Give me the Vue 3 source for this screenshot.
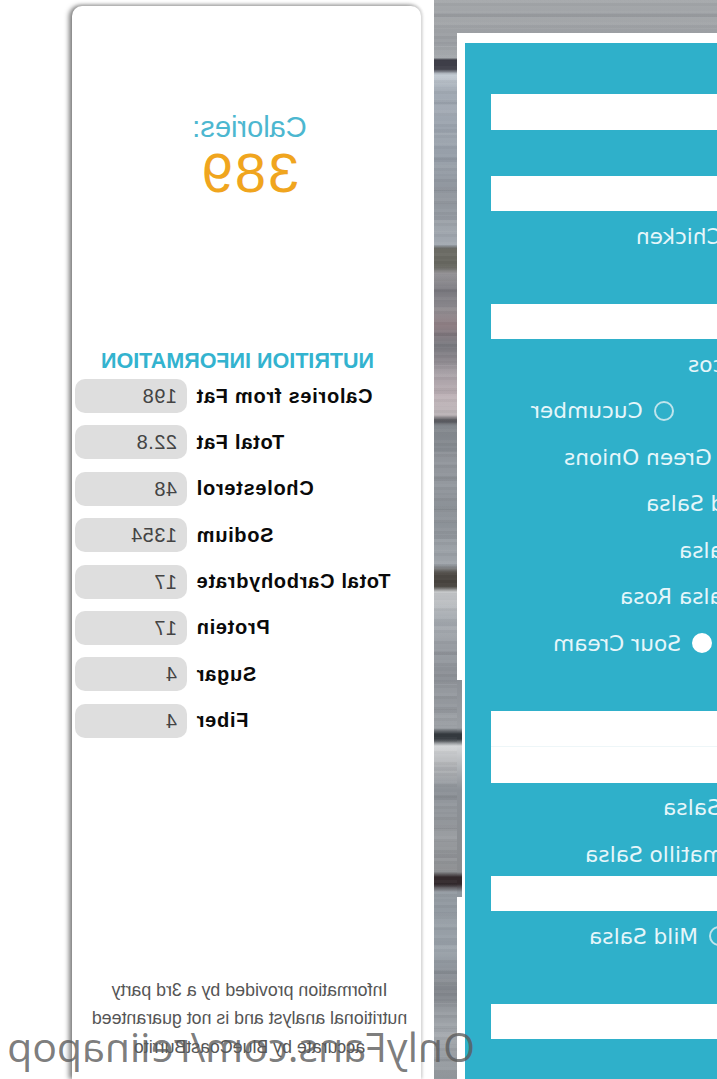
<template>
  <div class="page">
    <!-- order form on a wood background -->
    <section class="wood">
      <div class="frame">
        <form class="form" @submit.prevent>
          <div v-for="(group, g) in groups" :key="g" class="group">
            <template v-for="(part, p) in group" :key="p">
              <div class="bar" :class="{ double: part.double }"></div>
              <div v-for="row in part.rows" :key="row.options[row.options.length - 1].label" class="row" :style="{ width: row.end + 'px' }">
                <label v-for="opt in row.options" :key="opt.label" class="option">
                  <span class="radio" :class="{ on: opt.on }"></span>
                  {{ opt.label }}
                </label>
              </div>
            </template>
          </div>
        </form>
      </div>
    </section>

    <!-- nutrition card -->
    <aside class="card">
      <div class="calories">
        <div class="cal-label">Calories:</div>
        <div class="cal-value">{{ calories }}</div>
      </div>
      <h2 class="heading">NUTRITION INFORMATION</h2>
      <div class="facts">
        <div v-for="fact in facts" :key="fact.name" class="fact">
          <span class="fact-name">{{ fact.name }}</span>
          <span class="fact-value">{{ fact.value }}</span>
        </div>
      </div>
      <p class="note">
        Information provided by a 3rd party<br />
        nutritional analyst and is not guaranteed<br />
        accurate by BlueCoastBurrito
      </p>
    </aside>

    <div class="watermark">OnlyFans.com/reiinapop</div>
  </div>
</template>

<script setup>
const calories = 389;

const facts = [
  { name: 'Calories from Fat', value: '198' },
  { name: 'Total Fat', value: '22.8' },
  { name: 'Cholesterol', value: '48' },
  { name: 'Sodium', value: '1354' },
  { name: 'Total Carbohydrate', value: '17' },
  { name: 'Protein', value: '17' },
  { name: 'Sugar', value: '4' },
  { name: 'Fiber', value: '4' },
];

// end = where the row stops, from the clipped side of the panel
const opt = (end, ...labels) => ({ end, options: labels.map((label) => ({ label })) });

const groups = [
  [{ rows: [] }],
  [{ rows: [opt(81, 'Chicken')] }],
  [
    {
      rows: [
        opt(29, 'Tacos'),
        opt(186, 'Lettuce', 'Cucumber'),
        opt(153, 'Green Onions'),
        opt(71, 'Red Salsa'),
        opt(38, 'Salsa'),
        opt(97, 'Salsa Rosa'),
        { end: 164, options: [{ label: 'Sour Cream', on: true }] },
      ],
    },
  ],
  [
    { double: true, rows: [opt(54, 'Verde Salsa'), opt(132, 'Tomatillo Salsa')] },
    { rows: [opt(128, 'Mild Salsa')] },
  ],
  [{ rows: [] }],
];
</script>

<style scoped>
.page {
  position: relative;
  display: flex;
  width: 717px;
  height: 1079px;
  overflow: hidden;
  background: #fff;
  transform: scaleX(-1);
}

.wood {
  flex: 0 0 283px;
  height: 1079px;
  padding-top: 33px;
  box-sizing: border-box;
  background:
    repeating-linear-gradient(180deg, rgba(255, 255, 255, 0.03) 0 3px, rgba(0, 0, 0, 0.03) 3px 6px, transparent 6px 11px),
    repeating-linear-gradient(180deg, transparent 0 13px, rgba(40, 40, 50, 0.05) 13px 17px, rgba(255, 255, 255, 0.04) 17px 29px),
    linear-gradient(
      180deg,
      #a5a8ab 0,
      #9c9fa3 33px,
      #a0a4a9 58px,
      #3e3e48 60px,
      #3e3e48 69px,
      #c4ccd4 74px,
      #a3abb5 90px,
      #969ea8 160px,
      #8f949b 200px,
      #a3aab2 245px,
      #65655e 249px,
      #65655e 266px,
      #98969a 274px,
      #77767c 290px,
      #8c8a8f 305px,
      #8f7f84 325px,
      #74747a 345px,
      #a8a0a6 375px,
      #bcb0b5 395px,
      #bdb6b9 415px,
      #55555a 420px,
      #7d8288 426px,
      #92969c 470px,
      #8a9096 520px,
      #a0a5ab 565px,
      #46423d 573px,
      #46423d 586px,
      #c7c9cb 592px,
      #a6abb1 620px,
      #8c9096 670px,
      #9a9ea3 728px,
      #34393e 734px,
      #34393e 739px,
      #d3d5d7 746px,
      #b3b5b8 765px,
      #8c9197 790px,
      #979a9e 840px,
      #8a8c8f 872px,
      #33292c 877px,
      #33292c 884px,
      #90979e 892px,
      #9aa2aa 950px,
      #80848a 990px,
      #a4a9ae 1030px,
      #8f9499 1079px
    );
}

.frame {
  position: relative;
  width: 260px;
  height: 100%;
  padding: 10px 8px 0 0;
  box-sizing: border-box;
  background: #fff;
}

/* the torn white edge is thinner along this stretch */
.frame::after {
  content: '';
  position: absolute;
  top: 647px;
  right: 0;
  width: 5px;
  height: 217px;
  background: linear-gradient(
    180deg,
    #8c9096 0,
    #9a9ea3 48px,
    #34393e 54px,
    #34393e 59px,
    #d3d5d7 66px,
    #8c9197 110px,
    #8a8c8f 192px,
    #33292c 197px,
    #33292c 204px,
    #90979e 212px
  );
}

.form {
  display: flex;
  flex-direction: column;
  gap: 46px;
  height: 100%;
  padding-top: 51px;
  box-sizing: border-box;
  background: #2fb0ca;
  color: #e6f6fa;
  font-family: 'DejaVu Sans', sans-serif;
  font-size: 21.7px;
}

.bar {
  width: 226px;
  height: 35.5px;
  background: #fff;
}

.bar.double {
  height: 72px;
  background: linear-gradient(#fff 35px, #eef6f8 35px, #eef6f8 36px, #fff 36px);
}

.row {
  display: flex;
  justify-content: flex-end;
  align-items: center;
  gap: 44px;
  height: 46.5px;
  padding-top: 4px;
  box-sizing: border-box;
  white-space: nowrap;
}

.option {
  display: flex;
  flex: none;
  align-items: center;
  gap: 11px;
}

.radio {
  flex: none;
  width: 20px;
  height: 20px;
  border: 2px solid #bfe4ec;
  border-radius: 50%;
  box-sizing: border-box;
}

.radio.on {
  border-color: #fff;
  background: #fff;
}

.card {
  display: flex;
  flex-direction: column;
  flex: 0 0 349px;
  height: 1073px;
  margin: 6px 0 0 13px;
  padding: 0 3px 18px 0;
  box-sizing: border-box;
  border-radius: 10px 10px 0 0;
  background: #fff;
  box-shadow: 3px 0 5px #7d7d7d, 0 -2px 3px #dcdcdc, -2px 0 3px #e4e4e4;
  font-family: 'Liberation Sans', Arial, sans-serif;
}

.calories {
  margin-top: 104px;
  padding-right: 3px;
  text-align: center;
}

.cal-label {
  color: #4cb7d0;
  font-size: 29px;
  line-height: 34px;
}

.cal-value {
  color: #f0a51e;
  font-size: 56px;
  line-height: 58px;
  letter-spacing: 2px;
}

.heading {
  margin: 147px 0 0;
  padding-left: 21px;
  color: #33b3cf;
  font-size: 21.5px;
  line-height: 24px;
  text-align: center;
}

.facts {
  display: flex;
  flex-direction: column;
  gap: 12.4px;
  margin-top: 6px;
}

.fact {
  display: flex;
  justify-content: flex-end;
  align-items: center;
  gap: 9px;
}

.fact-name {
  color: #0a0a0a;
  font-size: 20px;
  font-weight: 700;
  letter-spacing: 0.7px;
  white-space: nowrap;
}

.fact-value {
  flex: none;
  width: 112px;
  height: 34px;
  padding-left: 10px;
  box-sizing: border-box;
  border-radius: 10px;
  background: #dedede;
  color: #444;
  font-size: 20px;
  line-height: 34px;
  letter-spacing: 0.5px;
}

.note {
  margin: auto 0 0;
  padding-right: 3px;
  color: #555;
  font-size: 17.8px;
  line-height: 28.5px;
  text-align: center;
}

.watermark {
  position: absolute;
  left: 242px;
  top: 1021px;
  color: rgba(90, 90, 90, 0.8);
  font-family: 'Open Sans', sans-serif;
  font-size: 41px;
  line-height: 50px;
  white-space: nowrap;
}
</style>

<style>
html,
body {
  margin: 0;
  overflow: hidden;
}
</style>
